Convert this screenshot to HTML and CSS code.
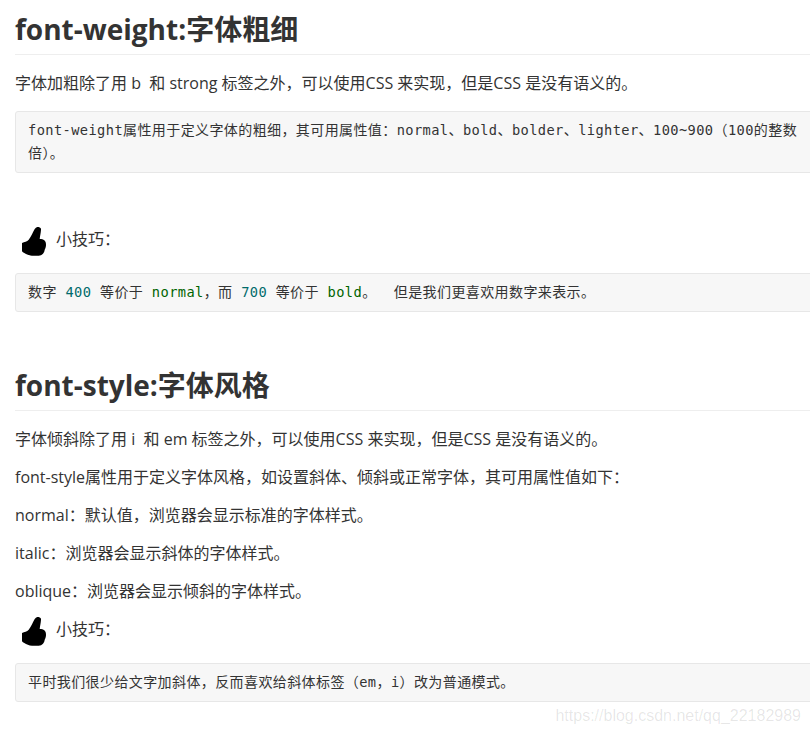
FILE: index.html
```html
<!DOCTYPE html>
<html lang="zh">
<head>
<meta charset="utf-8">
<title>font-weight</title>
<link rel="stylesheet" href="styles.css">
</head>
<body>
<main class="article">
  <h2 class="heading">font-weight:字体粗细</h2>
  <p class="para">字体加粗除了用 b&nbsp; 和 strong 标签之外，可以使用CSS 来实现，但是CSS 是没有语义的。</p>
  <pre class="code"><span class="en">font-weight</span>属性用于定义字体的粗细，其可用属性值：<span class="en">normal</span>、<span class="en">bold</span>、<span class="en">bolder</span>、<span class="en">lighter</span>、<span class="en">100~900</span>（<span class="en">100</span>的整数<br>倍）。</pre>
  <div class="tip tip-first">
    <svg class="thumb" viewBox="0 0 24 29"><path d="M0 16 C2.500 15 5 14.500 6.700 12.700 C9 10 11 5 12.700 2 C13.800 .3 15.500-.4 16.700 0 C18.500 .5 19.200 1.500 19 2.700 C18.800 6 18 9 17.700 12 C19.500 12 21.500 12.300 22.300 13.300 C23.700 14.500 24 16 24 17.700 C24 19.500 23.600 21.200 22.700 22.700 C22.500 24.200 22 25.600 21 26.700 C19.800 28 18.500 28.700 16.700 28.700 L10 28.700 C7 28.500 4.500 27.300 2.300 26 C1.300 25.700 .5 25.200 0 24.300 Z"/></svg>
    <span class="tip-text">小技巧：</span>
  </div>
  <pre class="code">数字<span class="en"> <span class="num">400</span> </span>等价于<span class="en"> <span class="kw">normal</span></span>，而<span class="en"> <span class="num">700</span> </span>等价于<span class="en"> <span class="kw">bold</span></span>。<span class="en">  </span>但是我们更喜欢用数字来表示。</pre>
  <h2 class="heading heading-second">font-style:字体风格</h2>
  <p class="para">字体倾斜除了用 i&nbsp; 和 em 标签之外，可以使用CSS 来实现，但是CSS 是没有语义的。</p>
  <p class="para">font-style属性用于定义字体风格，如设置斜体、倾斜或正常字体，其可用属性值如下：</p>
  <p class="para">normal：默认值，浏览器会显示标准的字体样式。</p>
  <p class="para">italic：浏览器会显示斜体的字体样式。</p>
  <p class="para para-last">oblique：浏览器会显示倾斜的字体样式。</p>
  <div class="tip">
    <svg class="thumb" viewBox="0 0 24 29"><path d="M0 16 C2.500 15 5 14.500 6.700 12.700 C9 10 11 5 12.700 2 C13.800 .3 15.500-.4 16.700 0 C18.500 .5 19.200 1.500 19 2.700 C18.800 6 18 9 17.700 12 C19.500 12 21.500 12.300 22.300 13.300 C23.700 14.500 24 16 24 17.700 C24 19.500 23.600 21.200 22.700 22.700 C22.500 24.200 22 25.600 21 26.700 C19.800 28 18.500 28.700 16.700 28.700 L10 28.700 C7 28.500 4.500 27.300 2.300 26 C1.300 25.700 .5 25.200 0 24.300 Z"/></svg>
    <span class="tip-text">小技巧：</span>
  </div>
  <pre class="code">平时我们很少给文字加斜体，反而喜欢给斜体标签（<span class="en">em</span>，<span class="en">i</span>）改为普通模式。</pre>
</main>
<div class="watermark">https://blog.csdn.net/qq_22182989</div>
</body>
</html>
```
FILE: styles.css
```css
html, body {
  margin: 0;
  height: 734px;
  overflow: hidden;
  background: #fff;
}
body {
  font-family: "Open Sans", "Noto Sans CJK SC", sans-serif;
  color: #333;
  position: relative;
}
.article {
  width: 805px;
  padding: 11px 0 0 15px;
  font-size: 16px;
}
.heading {
  margin: 0 0 16px;
  padding-bottom: 6px;
  font-size: 28px;
  line-height: 37px;
  font-weight: 700;
  border-bottom: 1px solid #eee;
}
.heading-second { margin-top: 54px; padding-bottom: 6px; padding-top: 1px; }
.para {
  margin: 0 0 13px;
  line-height: 25px;
  color: #333;
}
.para-last { margin-bottom: 10px; }
.code {
  margin: 15px 0 0;
  padding: 7px 12px;
  font-family: "DejaVu Sans Mono", "Noto Sans CJK SC", monospace;
  font-size: 14px;
  line-height: 23px;
  letter-spacing: .4px;
  white-space: pre-wrap;
  color: #333;
  background: #f7f7f7;
  border: 1px solid #e7e7e7;
  border-radius: 3px;
}
.en { font-size: 13.7px; }
.num { color: #006b6b; }
.kw { color: #006400; }
.tip {
  display: flex;
  align-items: flex-start;
  gap: 10px;
  padding-left: 7px;
  height: 32px;
  margin-bottom: 17px;
}
.tip-first { margin-top: 51px; }
.thumb { width: 24px; height: 29px; margin-top: 3px; }
.tip-text { line-height: 30px; }
.watermark {
  position: absolute;
  right: 9px;
  top: 707px;
  font: 16px "Liberation Sans", sans-serif;
  color: rgba(0,0,0,.1);
}
```
